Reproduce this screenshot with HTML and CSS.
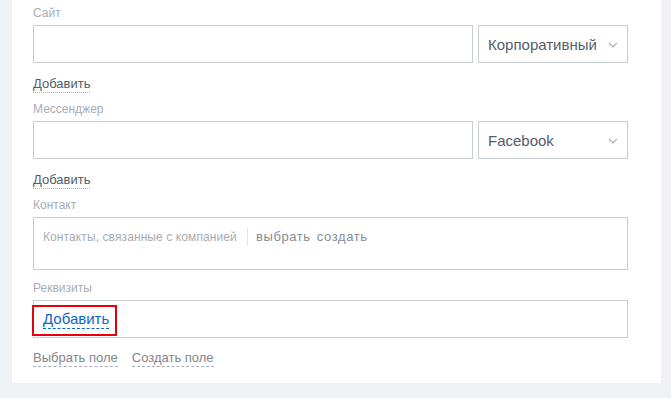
FILE: index.html
```html
<!DOCTYPE html>
<html lang="ru">
<head>
  <meta charset="UTF-8">
  <title>Компания - поля</title>
  <link rel="stylesheet" href="styles.css">
</head>
<body>

  <div class="card">

    <div class="field">
      <div class="label">Сайт</div>
      <div class="row">
        <div class="input"></div>
        <div class="select">
          <span>Корпоративный</span>
          <svg class="chevron" width="10" height="6" viewBox="0 0 10 6"><path d="M1 1l4 4 4-4" fill="none" stroke="#a7adb5" stroke-width="1.2"/></svg>
        </div>
      </div>
      <div class="add"><span class="dotted">Добавить</span></div>
    </div>

    <div class="field">
      <div class="label">Мессенджер</div>
      <div class="row">
        <div class="input"></div>
        <div class="select">
          <span>Facebook</span>
          <svg class="chevron" width="10" height="6" viewBox="0 0 10 6"><path d="M1 1l4 4 4-4" fill="none" stroke="#a7adb5" stroke-width="1.2"/></svg>
        </div>
      </div>
      <div class="add"><span class="dotted">Добавить</span></div>
    </div>

    <div class="field">
      <div class="label">Контакт</div>
      <div class="contact-box">
        <span class="placeholder">Контакты, связанные с компанией</span>
        <span class="divider"></span>
        <span class="action">выбрать</span>
        <span class="action">создать</span>
      </div>
    </div>

    <div class="field">
      <div class="label">Реквизиты</div>
      <div class="req-box">
        <span class="mark"></span>
        <span class="blue-link">Добавить</span>
      </div>
    </div>

    <div class="footer-links">
      <span class="dashed">Выбрать поле</span>
      <span class="dashed">Создать поле</span>
    </div>

  </div>

</body>
</html>
```

FILE: styles.css
```css
* {
  box-sizing: border-box;
}

body {
  margin: 0;
  background: #eef2f4;
  font-family: 'Liberation Sans', Arial, sans-serif;
  color: #535c69;
}

.card {
  margin-left: 12px;
  width: 649px;
  background: #fff;
  padding: 5px 33px 16px 21px;
}

.label {
  font-size: 12px;
  line-height: 17px;
  height: 17px;
  color: #a8adb4;
  margin-bottom: 3px;
}

.field + .field .label {
  margin-top: 8px;
}

.field + .field:nth-child(4) .label {
  margin-top: 10px;
}

.row {
  display: flex;
  gap: 5px;
}

.input {
  flex: 1;
  height: 38px;
  border: 1px solid #c6cdd3;
}

.select {
  width: 150px;
  height: 38px;
  border: 1px solid #c6cdd3;
  display: flex;
  align-items: center;
  justify-content: space-between;
  padding: 0 9px 0 9px;
  font-size: 15px;
  color: #535c69;
}

.chevron {
  margin-top: 1px;
}

.add {
  margin-top: 12px;
  height: 18px;
  font-size: 13px;
  line-height: 17px;
}

.dotted {
  display: inline-block;
  border-bottom: 1px dotted #a8adb4;
}

.contact-box {
  height: 53px;
  border: 1px solid #c6cdd3;
  padding: 10px 9px 0;
  display: flex;
  align-items: flex-start;
  font-size: 13px;
  line-height: 18px;
}

.placeholder {
  color: #a8adb4;
  font-size: 12px;
  letter-spacing: 0.1px;
}

.divider {
  width: 1px;
  height: 18px;
  background: #e3e6e9;
  margin: 0 8px 0 10px;
}

.action {
  color: #868c94;
  margin-right: 6px;
  letter-spacing: 0.6px;
}

.req-box {
  position: relative;
  height: 38px;
  border: 1px solid #c6cdd3;
  padding: 8px 9px;
}

.blue-link {
  display: inline-block;
  font-size: 15px;
  line-height: 19px;
  color: #0b66c3;
  border-bottom: 1px dashed #0b66c3;
}

.mark {
  position: absolute;
  left: -2px;
  top: 4px;
  width: 85px;
  height: 31px;
  border: 2px solid #e8000b;
}

.footer-links {
  margin-top: 11px;
  display: flex;
  gap: 14px;
  font-size: 13px;
  line-height: 17px;
}

.dashed {
  display: inline-block;
  border-bottom: 1px dashed #a8adb4;
  color: #80868e;
}
```
